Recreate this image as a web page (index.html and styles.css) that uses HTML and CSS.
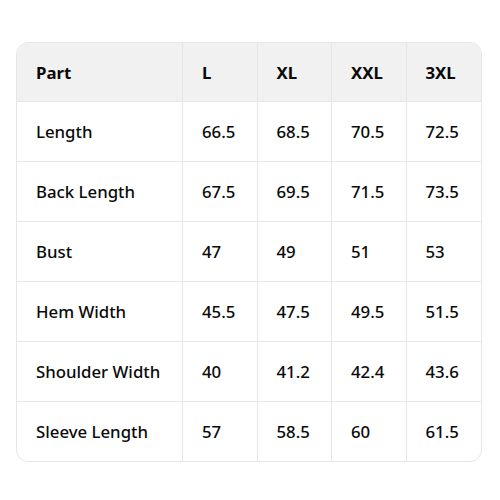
FILE: index.html
```html
<!DOCTYPE html>
<html>
<head>
<meta charset="utf-8">
<link rel="stylesheet" href="styles.css">
</head>
<body>
<div class="wrap">
<table class="size-table">
<thead>
<tr><th>Part</th><th>L</th><th>XL</th><th>XXL</th><th>3XL</th></tr>
</thead>
<tbody>
<tr><td>Length</td><td>66.5</td><td>68.5</td><td>70.5</td><td>72.5</td></tr>
<tr><td>Back Length</td><td>67.5</td><td>69.5</td><td>71.5</td><td>73.5</td></tr>
<tr><td>Bust</td><td>47</td><td>49</td><td>51</td><td>53</td></tr>
<tr><td>Hem Width</td><td>45.5</td><td>47.5</td><td>49.5</td><td>51.5</td></tr>
<tr><td>Shoulder Width</td><td>40</td><td>41.2</td><td>42.4</td><td>43.6</td></tr>
<tr><td>Sleeve Length</td><td>57</td><td>58.5</td><td>60</td><td>61.5</td></tr>
</tbody>
</table>
</div>
</body>
</html>
```
FILE: styles.css
```css
html, body {
  margin: 0;
  padding: 0;
  background: #fff;
}
.wrap {
  padding: 42px 18px 0 16px;
}
.size-table {
  width: 466px;
  border-collapse: separate;
  border-spacing: 0;
  border: 1px solid #e6e6e6;
  border-radius: 12px;
  overflow: hidden;
  font-family: "Noto Sans", sans-serif;
  font-size: 16.8px;
  color: #0a0a0a;
  table-layout: fixed;
}
.size-table th, .size-table td {
  height: 60px;
  padding: 0 0 0 19px;
  text-align: left;
  border-right: 1px solid #e6e6e6;
  border-bottom: 1px solid #e6e6e6;
  box-sizing: border-box;
}
.size-table th {
  height: 59px;
}
.size-table th:last-child, .size-table td:last-child {
  border-right: none;
}
.size-table tbody tr:last-child td {
  border-bottom: none;
  height: 59px;
}
.size-table th:first-child, .size-table td:first-child {
  width: 166px;
}
.size-table th {
  background: #f1f1f1;
  font-weight: 700;
}
.size-table td {
  font-weight: 500;
}
```
